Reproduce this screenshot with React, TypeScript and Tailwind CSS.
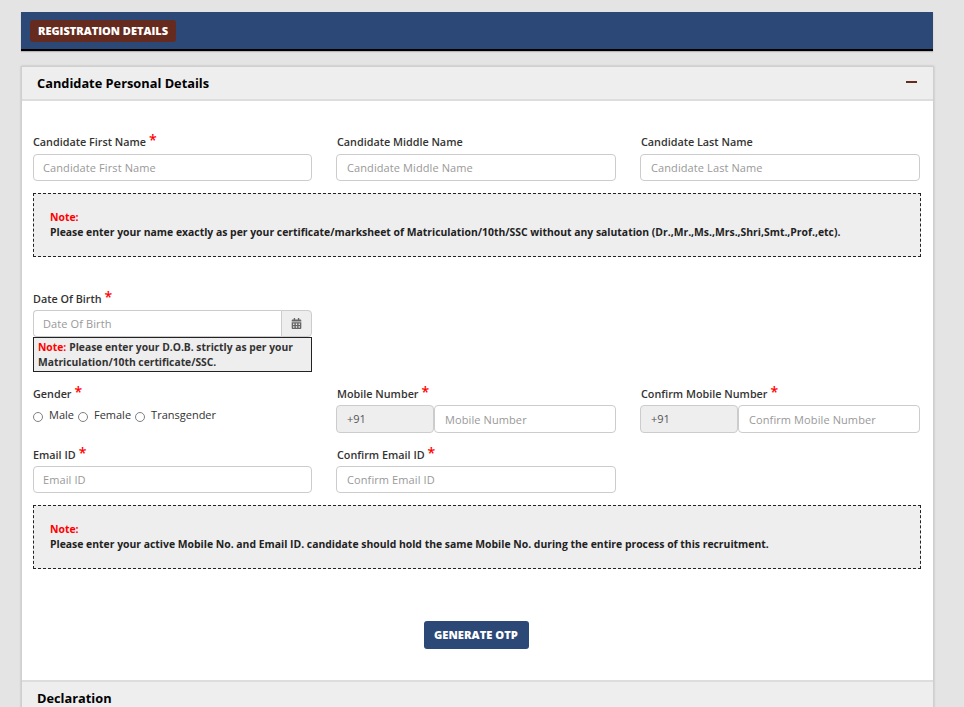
import { FaCalendarAlt } from "react-icons/fa";

const Star = () => <span className="text-[#ff0000] text-[14px] leading-none relative -top-[3px] ml-[3px] font-semibold">*</span>;

function Label({ text, required, inset, low }: { text: string; required?: boolean; inset?: boolean; low?: boolean }) {
  return (
    <div className={`h-[23px] flex items-center text-[10.8px] font-semibold text-[#333333] whitespace-nowrap ${inset ? "pl-[1px]" : ""} ${low ? "pt-[2px]" : ""}`}>
      <span>{text}</span>
      {required && <Star />}
    </div>
  );
}

function Input({ placeholder, className = "h-[27px] px-[10px]" }: { placeholder: string; className?: string }) {
  return (
    <input
      placeholder={placeholder}
      className={`w-full min-w-0 ${className} border border-[#cccccc] rounded-[4px] bg-white text-[11px] tracking-[0.1px] text-[#555] placeholder:text-[#999999] outline-none`}
    />
  );
}

function Field({ label, required, placeholder, first, low }: { label: string; required?: boolean; placeholder: string; first?: boolean; low?: boolean }) {
  return (
    <div className={first ? "w-[279px]" : "w-[280px]"}>
      <Label text={label} required={required} inset={!first} low={low} />
      <Input placeholder={placeholder} className={first ? "h-[27px] px-[9px]" : "h-[27px] px-[10px]"} />
    </div>
  );
}

function Phone({ label, placeholder }: { label: string; placeholder: string }) {
  return (
    <div className="w-[280px]">
      <Label text={label} required inset low />
      <div className="flex">
        <div className="w-[98px] h-[28px] shrink-0 flex items-center border border-[#cccccc] rounded-[4px] bg-[#eeeeee] px-[10px] text-[11px] text-[#555]">+91</div>
        <Input placeholder={placeholder} className="h-[28px] px-[10px]" />
      </div>
    </div>
  );
}

function Note({ text }: { text: string }) {
  return (
    <div className="w-[888px] h-[64px] border border-dashed border-[#222222] bg-[#eeeeee] pl-[16px] flex flex-col justify-center text-[10.4px] font-bold leading-[15px]">
      <div className="text-[#ff0000]">Note:</div>
      <div className="text-[#222222] whitespace-nowrap">{text}</div>
    </div>
  );
}

function Radio({ label }: { label: string }) {
  return (
    <label className="flex items-center whitespace-nowrap text-[11px] text-[#333333]">
      <span className="w-[10px] h-[10px] rounded-full border border-[#808080] bg-white mt-[3px] mr-[6px] shrink-0" />
      <span className="mr-[4px] -mt-[1px]">{label}</span>
    </label>
  );
}

function SectionHeader({ title, minus }: { title: string; minus?: boolean }) {
  return (
    <div className="h-[34px] shrink-0 bg-[#eeeeee] border-b-2 border-[#dddddd] flex items-center justify-between pl-[15px] pr-[16px] pt-[2px]">
      <span className="text-[12.8px] font-bold text-black">{title}</span>
      {minus && <span className="w-[11px] h-[2px] bg-[#662b1f] -mt-[4px]" />}
    </div>
  );
}

export default function App() {
  return (
    <div className="h-[707px] overflow-hidden bg-[#e4e4e4] pl-[21px] pt-[12px] font-['Open_Sans',sans-serif]">
      <div className="w-[912px] h-[39px] bg-[#2c4877] border-b-2 border-black flex items-start pl-[9px] pt-[8px] shadow-[0_1px_1px_rgba(0,0,0,0.2)]">
        <span className="h-[22px] flex items-center px-[8px] bg-[#662b1f] rounded-[3px] text-white text-[11px] font-extrabold whitespace-nowrap">REGISTRATION DETAILS</span>
      </div>
      <div className="w-[913px] mt-[15px] bg-white border-r border-l border-[#cfcfcf] border-t shadow-[0_0_2px_rgba(0,0,0,0.2)] flex flex-col">
        <SectionHeader title="Candidate Personal Details" minus />
        <div className="pl-[11px] pt-[30px] h-[579px]">
          <div className="flex gap-[24px]">
            <Field first label="Candidate First Name" required placeholder="Candidate First Name" />
            <Field label="Candidate Middle Name" placeholder="Candidate Middle Name" />
            <Field label="Candidate Last Name" placeholder="Candidate Last Name" />
          </div>
          <div className="mt-[12px]">
            <Note text="Please enter your name exactly as per your certificate/marksheet of Matriculation/10th/SSC without any salutation (Dr.,Mr.,Ms.,Mrs.,Shri,Smt.,Prof.,etc)." />
          </div>
          <div className="mt-[30px] w-[279px]">
            <Label text="Date Of Birth" required low />
            <div className="flex">
              <Input placeholder="Date Of Birth" className="h-[27px] px-[9px] rounded-r-none border-r-0" />
              <div className="w-[31px] h-[27px] shrink-0 flex items-center justify-center border border-[#cccccc] rounded-r-[4px] bg-[#eeeeee] text-[#666666]">
                <FaCalendarAlt size={11} />
              </div>
            </div>
            <div className="border border-[#222222] bg-[#eeeeee] h-[35px] px-[4px] pt-[2px] text-[10.3px] leading-[15px] font-bold text-[#333333]">
              <div><span className="text-[#ff0000] mr-[3px]">Note:</span>Please enter your D.O.B. strictly as per your</div>
              <div>Matriculation/10th certificate/SSC.</div>
            </div>
          </div>
          <div className="flex gap-[24px] mt-[10px]">
            <div className="w-[279px]">
              <Label text="Gender" required low />
              <div className="flex mt-[3px]">
                <Radio label="Male" />
                <Radio label="Female" />
                <Radio label="Transgender" />
              </div>
            </div>
            <Phone label="Mobile Number" placeholder="Mobile Number" />
            <Phone label="Confirm Mobile Number" placeholder="Confirm Mobile Number" />
          </div>
          <div className="flex gap-[24px] mt-[10px]">
            <Field first low label="Email ID" required placeholder="Email ID" />
            <Field low label="Confirm Email ID" required placeholder="Confirm Email ID" />
          </div>
          <div className="mt-[12px]">
            <Note text="Please enter your active Mobile No. and Email ID. candidate should hold the same Mobile No. during the entire process of this recruitment." />
          </div>
          <div className="w-[886px] flex justify-center mt-[52px]">
            <button className="w-[105px] h-[28px] bg-[#2c4877] rounded-[3px] text-white text-[11.2px] font-extrabold whitespace-nowrap">GENERATE OTP</button>
          </div>
        </div>
        <div className="border-t-2 border-[#dddddd]">
          <SectionHeader title="Declaration" />
        </div>
      </div>
    </div>
  );
}
